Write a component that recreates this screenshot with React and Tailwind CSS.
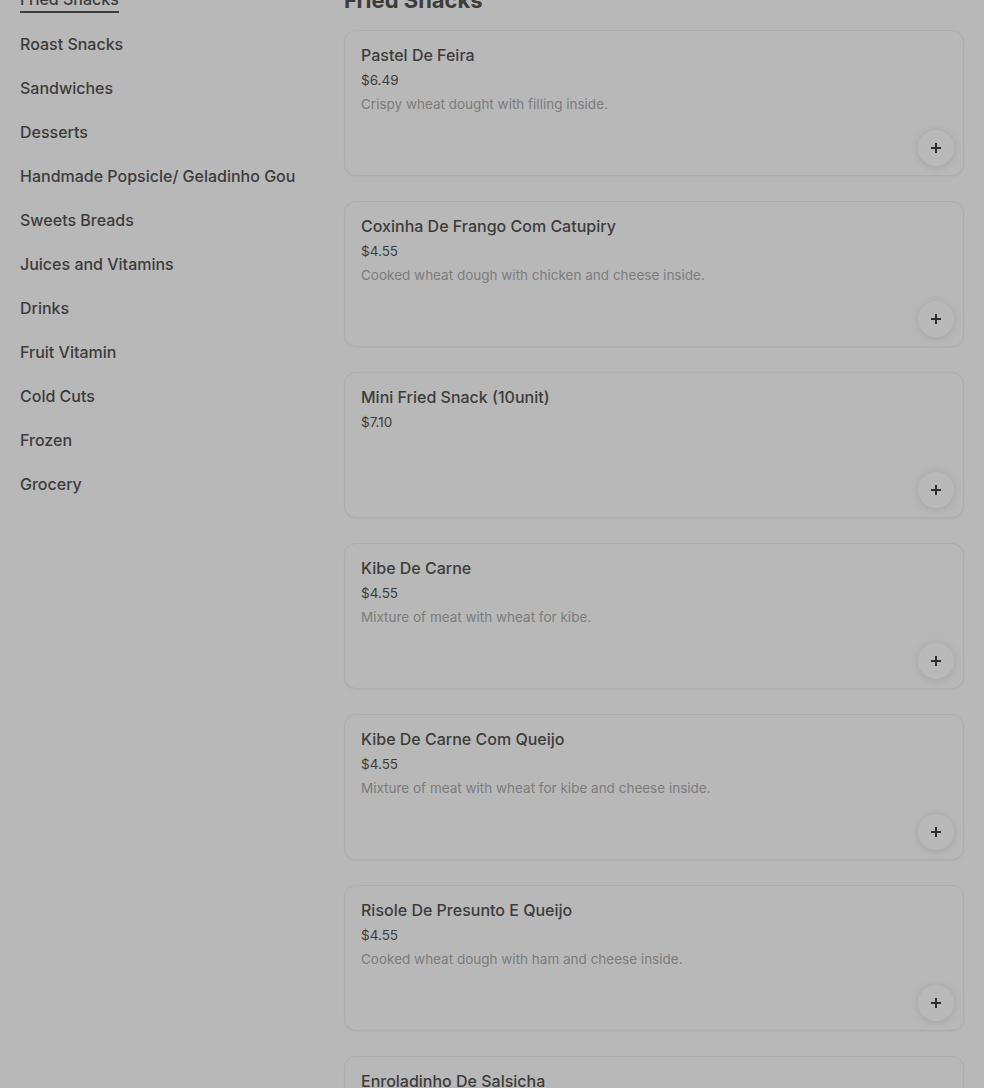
const categories = [
  "Fried Snacks",
  "Roast Snacks",
  "Sandwiches",
  "Desserts",
  "Handmade Popsicle/ Geladinho Gourmet",
  "Sweets Breads",
  "Juices and Vitamins",
  "Drinks",
  "Fruit Vitamin",
  "Cold Cuts",
  "Frozen",
  "Grocery",
];

const items = [
  { name: "Pastel De Feira", price: "$6.49", desc: "Crispy wheat dought with filling inside." },
  { name: "Coxinha De Frango Com Catupiry", price: "$4.55", desc: "Cooked wheat dough with chicken and cheese inside." },
  { name: "Mini Fried Snack (10unit)", price: "$7.10", desc: "" },
  { name: "Kibe De Carne", price: "$4.55", desc: "Mixture of meat with wheat for kibe." },
  { name: "Kibe De Carne Com Queijo", price: "$4.55", desc: "Mixture of meat with wheat for kibe and cheese inside." },
  { name: "Risole De Presunto E Queijo", price: "$4.55", desc: "Cooked wheat dough with ham and cheese inside." },
  { name: "Enroladinho De Salsicha", price: "$4.55", desc: "Wheat dough rolled with sausage inside." },
];

function PlusIcon() {
  return (
    <svg width="12" height="12" viewBox="0 0 12 12" fill="none">
      <path d="M6 1v10M1 6h10" stroke="#2e2e2e" strokeWidth="2" />
    </svg>
  );
}

function ItemCard({ item }) {
  return (
    <article className="flex h-[146px] flex-col rounded-xl border border-[#adadad] bg-[#b8b8b8] px-4 pt-3 pb-[9px] shadow-[0_1px_2px_rgba(0,0,0,0.04)]">
      <h3 className="text-[16px] font-medium leading-6 text-[#3c3c3c]">{item.name}</h3>
      <p className="mt-[3px] text-[13.5px] leading-5 text-[#3c3c3c]">{item.price}</p>
      {item.desc && <p className="mt-1 text-[13.5px] leading-5 text-[#7c7c7c]">{item.desc}</p>}
      <button
        type="button"
        aria-label={`Add ${item.name}`}
        className="-mr-[7px] mt-auto flex h-9 w-9 items-center justify-center self-end rounded-full bg-[#b9b9b9] shadow-[0_1px_8px_rgba(0,0,0,0.12)]"
      >
        <PlusIcon />
      </button>
    </article>
  );
}

export default function App() {
  return (
    <div
      className="min-h-screen overflow-hidden bg-[#b8b8b8]"
      style={{ fontFamily: "Inter, 'Noto Sans', sans-serif" }}
    >
      <div className="mt-[-22px] flex">
        <nav className="ml-5 w-[276px] shrink-0 overflow-hidden whitespace-nowrap">
          {categories.map((c, i) => (
            <div key={c} className="flex h-11 items-center">
              <span
                className={`text-[16px] font-medium leading-6 text-[#3c3c3c] ${
                  i === 0 ? "border-b-2 border-[#3c3c3c]" : ""
                }`}
              >
                {c}
              </span>
            </div>
          ))}
        </nav>
        <main className="ml-12 mr-5 flex-1">
          <h2 className="mt-[6px] mb-[14px] text-[22px] font-bold leading-8 text-[#3c3c3c]">Fried Snacks</h2>
          <div className="flex flex-col gap-[25px]">
            {items.map((item) => (
              <ItemCard key={item.name} item={item} />
            ))}
          </div>
        </main>
      </div>
    </div>
  );
}
